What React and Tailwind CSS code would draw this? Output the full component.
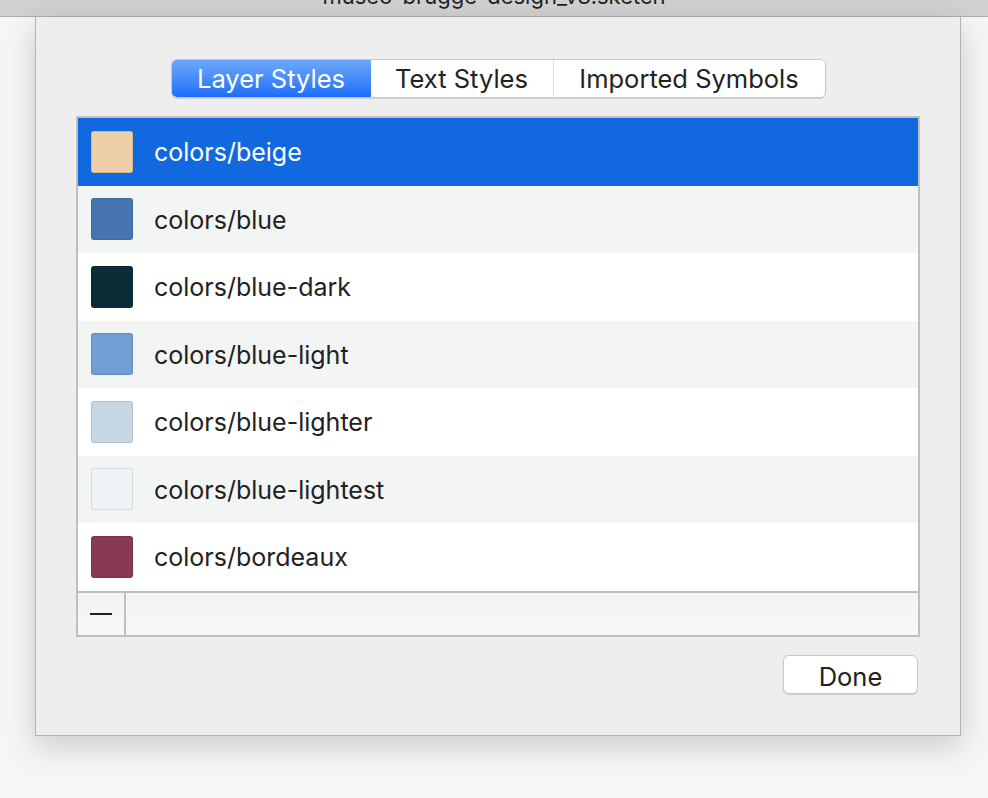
const styles = [
  { name: 'colors/beige', color: '#edd0a6' },
  { name: 'colors/blue', color: '#4674b1' },
  { name: 'colors/blue-dark', color: '#0b2d38' },
  { name: 'colors/blue-light', color: '#729ed6' },
  { name: 'colors/blue-lighter', color: '#c7d6e3' },
  { name: 'colors/blue-lightest', color: '#edf3f6' },
  { name: 'colors/bordeaux', color: '#873a52' },
];

function Segmented() {
  return (
    <div className="flex h-[39px] rounded-[6px] border border-[#c9c9c9] shadow-[0_1px_1px_rgba(0,0,0,0.12)] overflow-hidden text-[25.5px]">
      <div className="w-[199px] pt-[2px] flex items-center justify-center text-white bg-gradient-to-b from-[#6ea8fb] to-[#1a6dfb]">
        Layer Styles
      </div>
      <div className="w-[183px] pt-[2px] flex items-center justify-center bg-white text-[#222] border-r border-[#dcdcdc]">
        Text Styles
      </div>
      <div className="w-[271px] pt-[2px] flex items-center justify-center bg-white text-[#222]">
        Imported Symbols
      </div>
    </div>
  );
}

function Row({ item, index }) {
  const selected = index === 0;
  const bg = selected ? 'bg-[#1268de] text-white' : index % 2 === 1 ? 'bg-[#f3f5f5] text-[#222]' : 'bg-white text-[#222]';
  return (
    <div className={`h-[67.5px] flex items-center ${bg}`}>
      <div
        className="ml-[13px] w-[42px] h-[42px] rounded-[3px] border border-black/10"
        style={{ backgroundColor: item.color }}
      />
      <span className="ml-[21px] mt-[2px] text-[25px]">{item.name}</span>
    </div>
  );
}

export default function App() {
  return (
    <div className="h-[798px] bg-[#f6f6f6] overflow-hidden" style={{ fontFamily: 'Inter, "Noto Sans", sans-serif' }}>
      {/* window title bar, its text runs off the top edge */}
      <div className="h-[17px] overflow-hidden bg-[#d1d1d1] border-b border-[#adadad] flex justify-center">
        <span className="block -mt-[15px] text-[22px] leading-[22px] text-[#222]">museo-brugge-design_v3.sketch</span>
      </div>

      {/* sheet */}
      <div className="ml-[35px] w-[926px] bg-[#eeeeee] border-x border-b border-[#b3b3b3] shadow-[0_10px_30px_rgba(0,0,0,0.18)] px-[40px] pt-[42px] pb-[41px]">
        <div className="flex justify-center">
          <Segmented />
        </div>

        <div className="mt-[18px] border-2 border-[#bfbfbf] bg-white">
          {styles.map((item, i) => (
            <Row key={item.name} item={item} index={i} />
          ))}
          <div className="h-[44px] border-t-2 border-[#bfbfbf] bg-gradient-to-b from-[#f3f3f3] to-[#f8f8f8] flex">
            <div className="w-[48px] border-r-2 border-[#bfbfbf] flex items-center justify-center">
              <div className="w-[22px] h-[2px] bg-[#222]" />
            </div>
          </div>
        </div>

        <div className="mt-[18px] flex justify-end pr-[2px]">
          <button className="w-[135px] h-[39px] pt-[2px] rounded-[6px] bg-white border border-[#c8c8c8] shadow-[0_1px_1px_rgba(0,0,0,0.15)] text-[25.5px] text-[#222]">
            Done
          </button>
        </div>
      </div>
    </div>
  );
}
